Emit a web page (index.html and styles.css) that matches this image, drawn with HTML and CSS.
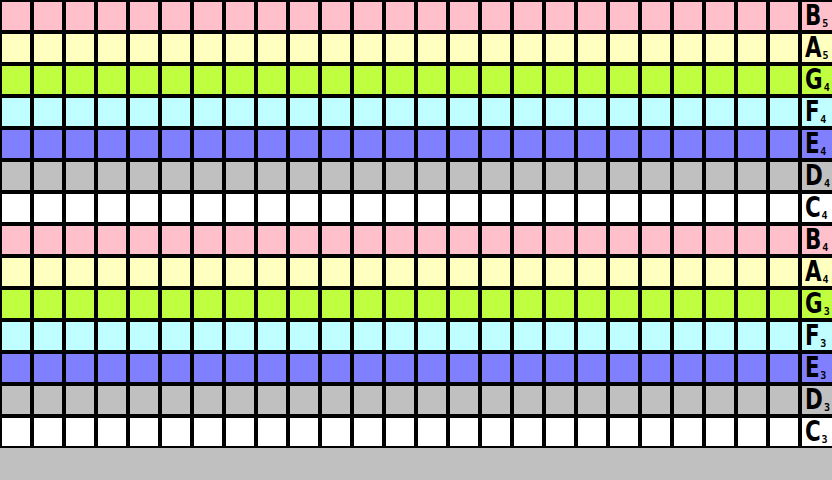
FILE: index.html
```html
<!DOCTYPE html>
<html lang="en">
<head>
  <meta charset="utf-8">
  <title>piano roll</title>
  <link rel="stylesheet" href="styles.css">
</head>
<body>
  <main id="roll" class="roll"></main>
<script>
  'use strict';

  var notes = ['B5','A5','G4','F4','E4','D4','C4','B4','A4','G3','F3','E3','D3','C3'];
  var tones = {B:'pink', A:'yellow', G:'green', F:'cyan', E:'blue', D:'gray', C:'white'};
  var steps = 25;

  var roll = document.getElementById('roll');
  notes.forEach(function(note) {
    var row = document.createElement('div');
    row.className = 'row ' + tones[note[0]];
    for (var i = 0; i < steps; i++) {
      var cell = document.createElement('div');
      cell.className = 'cell';
      row.appendChild(cell);
    }
    var label = document.createElement('div');
    label.className = 'label';
    label.innerHTML = '<span class="name">' + note[0] + '</span><span class="oct">' + note[1] + '</span>';
    row.appendChild(label);
    roll.appendChild(row);
  });
</script>
</body>
</html>
```

FILE: styles.css
```css
html, body {
  margin: 0;
  height: 100%;
  overflow: hidden;
  background-color: #c0c0c0;
}
.roll {
  display: flex;
  flex-direction: column;
  width: 832px;
}
.row {
  display: flex;
  height: 32px;
}
.cell {
  box-sizing: border-box;
  width: 32px;
  height: 32px;
  flex: none;
  border: solid 2px #000000;
}
.label {
  box-sizing: border-box;
  display: flex;
  align-items: flex-end;
  width: 32px;
  height: 32px;
  flex: none;
  padding: 0 0 2px 3px;
  border: solid 2px #000000;
  border-right: none;
  color: #000000;
  font-family: 'DejaVu Sans Condensed', 'DejaVu Sans', sans-serif;
  font-weight: bold;
}
.name {
  font-size: 28px;
  line-height: 24px;
  margin-right: -2px;
  transform: scaleX(0.85);
  transform-origin: left bottom;
}
.oct {
  font-family: 'DejaVu Sans Mono', monospace;
  font-size: 10px;
  line-height: 8px;
}
.pink .cell, .pink .label { background-color: #ffc0cb; }
.yellow .cell, .yellow .label { background-color: #ffffc0; }
.green .cell, .green .label { background-color: #c0ff40; }
.cyan .cell, .cyan .label { background-color: #c0ffff; }
.blue .cell, .blue .label { background-color: #8080ff; }
.gray .cell, .gray .label { background-color: #c0c0c0; }
.white .cell, .white .label { background-color: #ffffff; }
```
